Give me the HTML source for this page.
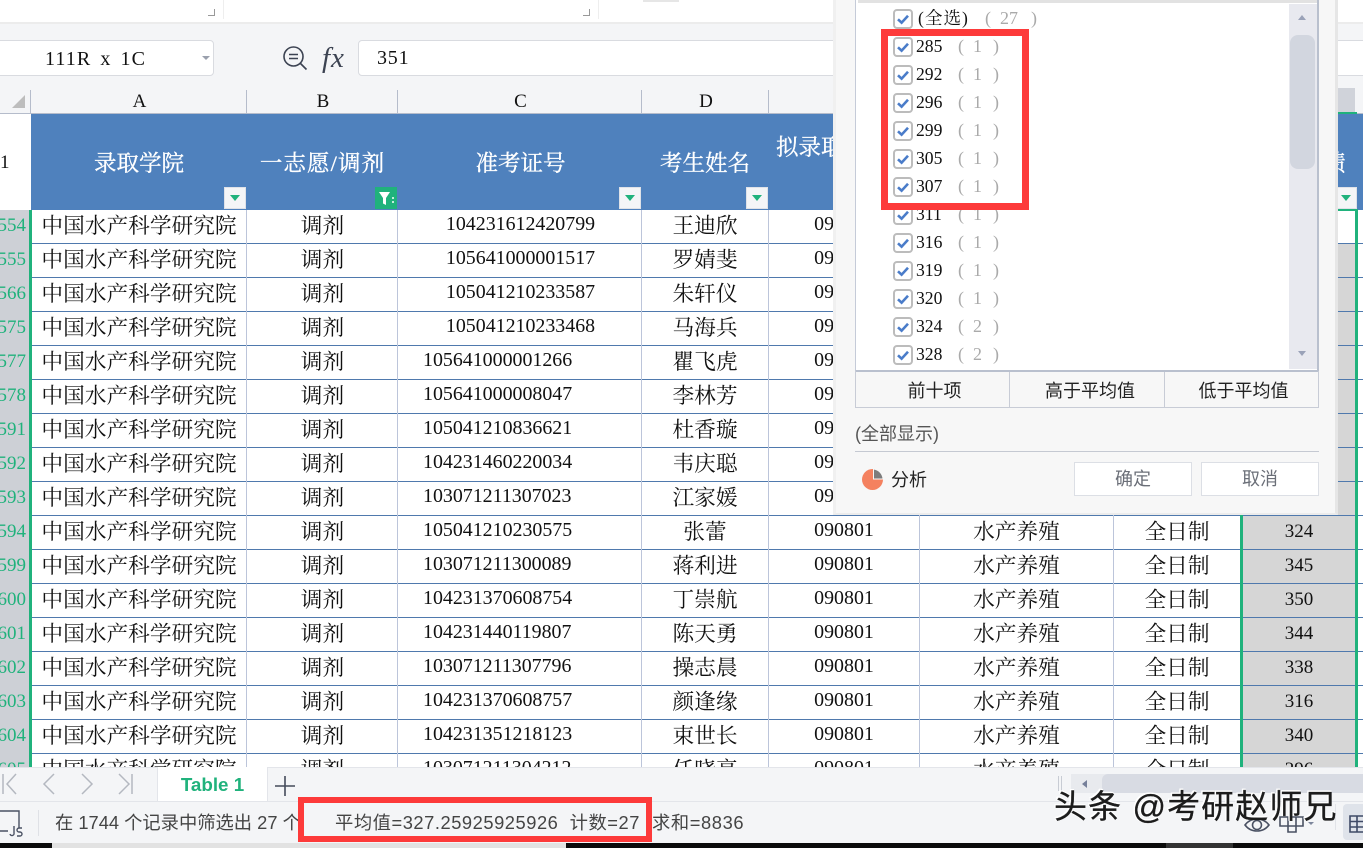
<!DOCTYPE html>
<html lang="zh">
<head>
<meta charset="utf-8">
<title>Table 1</title>
<style>
html,body{margin:0;padding:0}
body{width:1363px;height:848px;position:relative;overflow:hidden;background:#fff;font-family:"Liberation Serif","Noto Serif CJK SC",serif;color:#111}
div,span{box-sizing:border-box}
.p{position:absolute}
.hl{position:absolute;left:31px;width:1332px;height:1px;background:#4f79ad}
.vl{position:absolute;top:210px;height:557px;width:1px;background:#bcc5da}
.r{position:absolute;left:0;width:1363px;height:33px;line-height:32px;font-size:21.7px;white-space:nowrap}
.r span{position:absolute;top:0;text-align:center}
.n{left:0;width:26px;text-align:right!important;color:#20b27c;font-size:19px;direction:rtl;overflow:hidden}
.a{left:31px;width:216px}
.b{left:247px;width:151px}
.c{font-size:19.9px;top:-2px!important}
.c1{left:398px;width:245px}
.c2{left:423px;text-align:left!important}
.d{left:642px;width:126px}
.e{left:769px;width:150px;font-size:19.9px;top:-2px!important}
.f{left:920px;width:193px}
.g{left:1114px;width:126px}
.h{left:1243px;width:112px;font-size:19px;top:0!important}
.gy{position:absolute;left:1243px;width:112px;height:33px;background:#d6d6d6}
.lg{position:absolute;left:0;top:210px;width:30px;height:557px;background:#cdd0d6}
.ch{position:absolute;top:92px;font-size:19px;line-height:20px;text-align:center}
.cs{position:absolute;top:90px;width:1px;height:23px;background:#b5bccb}
.th{position:absolute;top:149px;height:30px;line-height:30px;font-size:22.5px;color:#fff;text-align:center;white-space:nowrap;-webkit-text-stroke:.35px #fff}
.fb{position:absolute;top:187px;width:22px;height:22px;background:#f4f5f7;border:1px solid #dfe2e8}
.fb:after{content:"";position:absolute;left:5px;top:7px;border-left:5px solid transparent;border-right:5px solid transparent;border-top:6px solid #20b27c}
.it{position:absolute;left:0;width:400px;height:28px;font-size:17.6px;line-height:26px;white-space:nowrap}
.it svg{position:absolute;left:38px;top:4px}
.it b{position:absolute;font-weight:normal;left:61px;top:0}
.it i{position:absolute;font-style:normal;color:#aaa;top:0;font-size:18px}
.btm{position:absolute;top:372px;height:39px;text-align:center;font:18px/38px "Liberation Sans","Noto Sans CJK SC",sans-serif;color:#222}
.st{position:absolute;top:810px;font:18.3px/26px "Liberation Sans","Noto Sans CJK SC",sans-serif;color:#444;white-space:nowrap}
</style>
</head>
<body>
<svg width="0" height="0" style="position:absolute"><defs>
<g id="k"><rect x="1" y="1" width="18" height="18" rx="3" fill="#fff" stroke="#bcbcbc" stroke-width="2"/><path d="M5 10.3l3.6 3.4L15 6.8" fill="none" stroke="#4a7cc9" stroke-width="2.6"/></g>
</defs></svg>

<!-- top ribbon -->
<div class="p" style="left:0;top:0;width:1363px;height:23px;background:#fff"></div>
<div class="p" style="left:208px;top:9px;width:7px;height:7px;border-right:1px solid #999;border-bottom:1px solid #999"></div>
<div class="p" style="left:583px;top:9px;width:7px;height:7px;border-right:1px solid #999;border-bottom:1px solid #999"></div>
<div class="p" style="left:223px;top:0;width:1px;height:19px;background:#eee"></div>
<div class="p" style="left:598px;top:0;width:1px;height:19px;background:#eee"></div>
<div class="p" style="left:643px;top:0;width:36px;height:2px;background:#e6e6e6"></div>

<!-- formula bar -->
<div class="p" style="left:0;top:23px;width:1363px;height:91px;background:#f4f5f7"></div>
<div class="p" style="left:0;top:22px;width:1363px;height:2px;background:#ececec"></div>
<div class="p" style="left:-6px;top:40px;width:220px;height:36px;background:#fff;border:1px solid #d9dbe0;border-radius:4px"></div>
<div class="p" style="left:45px;top:46px;font-size:20px;line-height:26px;letter-spacing:1.1px;word-spacing:3px;white-space:pre">111R x 1C</div>
<div class="p" style="left:202px;top:56px;border-left:4px solid transparent;border-right:4px solid transparent;border-top:4px solid #9aa0ad"></div>
<svg class="p" style="left:282px;top:45px" width="26" height="26" viewBox="0 0 26 26" fill="none" stroke="#3c4352" stroke-width="1.6"><circle cx="11.5" cy="11.5" r="9.5"/><path d="M7 9.5h9M7 13.5h9M18.5 18.5l6 6"/></svg>
<div class="p" style="left:322px;top:42px;font:italic 29px/32px 'Liberation Serif',serif;letter-spacing:1px;color:#3c4352">fx</div>
<div class="p" style="left:358px;top:40px;width:1010px;height:36px;background:#fff;border:1px solid #d9dbe0;border-radius:4px"></div>
<div class="p" style="left:377px;top:45px;font-size:20px;line-height:26px;letter-spacing:.8px">351</div>

<!-- column headers -->
<div class="p" style="left:0;top:113px;width:1363px;height:1px;background:#b5bccb"></div>
<div class="p" style="left:12px;top:95px;width:0;height:0;border-left:13px solid transparent;border-bottom:13px solid #bdbdbd"></div>
<div class="cs" style="left:30px"></div><div class="cs" style="left:246px"></div><div class="cs" style="left:397px"></div><div class="cs" style="left:641px"></div><div class="cs" style="left:768px"></div>
<div class="ch" style="left:32px;width:215px">A</div>
<div class="ch" style="left:248px;width:150px">B</div>
<div class="ch" style="left:399px;width:243px">C</div>
<div class="ch" style="left:643px;width:126px">D</div>
<div class="p" style="left:1338px;top:88px;width:17px;height:25px;background:#d0d3da"></div>
<div class="p" style="left:1338px;top:112px;width:19px;height:2px;background:#20b27c"></div>

<!-- blue header -->
<div class="p" style="left:31px;top:114px;width:1332px;height:96px;background:#4f81bd"></div>
<div class="p" style="left:0;top:150px;font-size:19px;line-height:26px">1</div>
<div class="th" style="left:31px;width:216px">录取学院</div>
<div class="th" style="left:247px;width:151px;letter-spacing:1.1px">一志愿/调剂</div>
<div class="th" style="left:398px;width:245px">准考证号</div>
<div class="th" style="left:642px;width:126px">考生姓名</div>
<div class="th" style="left:776px;top:133px">拟录取专业</div>
<div class="th" style="left:1323px">绩</div>
<div class="fb" style="left:224px"></div>
<div class="p" style="left:375px;top:187px;width:22px;height:22px;background:#20b27c"></div>
<svg class="p" style="left:375px;top:187px" width="22" height="22" viewBox="0 0 22 22"><path d="M4 5h11l-4 6v7l-3-1.5V11z" fill="#fff"/><path d="M17 11h2M17 15h2" stroke="#fff" stroke-width="1.6"/></svg>
<div class="fb" style="left:619px"></div>
<div class="fb" style="left:746px"></div>
<div class="fb" style="left:1335px"></div>

<!-- data -->
<div class="lg"></div>
<div class="gy" style="top:244px"></div><div class="gy" style="top:278px"></div><div class="gy" style="top:312px"></div><div class="gy" style="top:346px"></div><div class="gy" style="top:380px"></div><div class="gy" style="top:414px"></div><div class="gy" style="top:448px"></div><div class="gy" style="top:482px"></div><div class="gy" style="top:516px"></div><div class="gy" style="top:550px"></div><div class="gy" style="top:584px"></div><div class="gy" style="top:618px"></div><div class="gy" style="top:652px"></div><div class="gy" style="top:686px"></div><div class="gy" style="top:720px"></div><div class="gy" style="top:754px"></div>

<div class="hl" style="top:243px"></div><div class="hl" style="top:277px"></div><div class="hl" style="top:311px"></div><div class="hl" style="top:345px"></div><div class="hl" style="top:379px"></div><div class="hl" style="top:413px"></div><div class="hl" style="top:447px"></div><div class="hl" style="top:481px"></div><div class="hl" style="top:515px"></div><div class="hl" style="top:549px"></div><div class="hl" style="top:583px"></div><div class="hl" style="top:617px"></div><div class="hl" style="top:651px"></div><div class="hl" style="top:685px"></div><div class="hl" style="top:719px"></div><div class="hl" style="top:753px"></div>

<div class="vl" style="left:246px"></div><div class="vl" style="left:397px"></div><div class="vl" style="left:641px"></div><div class="vl" style="left:768px"></div><div class="vl" style="left:919px"></div><div class="vl" style="left:1113px"></div>

<div class="r" style="top:210px"><span class="n">1554</span><span class="a">中国水产科学研究院</span><span class="b">调剂</span><span class="c c1">104231612420799</span><span class="d">王迪欣</span><span class="e">090801</span><span class="f">水产养殖</span><span class="g">全日制</span></div>
<div class="r" style="top:244px"><span class="n">1555</span><span class="a">中国水产科学研究院</span><span class="b">调剂</span><span class="c c1">105641000001517</span><span class="d">罗婧斐</span><span class="e">090801</span><span class="f">水产养殖</span><span class="g">全日制</span></div>
<div class="r" style="top:278px"><span class="n">1566</span><span class="a">中国水产科学研究院</span><span class="b">调剂</span><span class="c c1">105041210233587</span><span class="d">朱轩仪</span><span class="e">090801</span><span class="f">水产养殖</span><span class="g">全日制</span></div>
<div class="r" style="top:312px"><span class="n">1575</span><span class="a">中国水产科学研究院</span><span class="b">调剂</span><span class="c c1">105041210233468</span><span class="d">马海兵</span><span class="e">090801</span><span class="f">水产养殖</span><span class="g">全日制</span></div>
<div class="r" style="top:346px"><span class="n">1577</span><span class="a">中国水产科学研究院</span><span class="b">调剂</span><span class="c c2">105641000001266</span><span class="d">瞿飞虎</span><span class="e">090801</span><span class="f">水产养殖</span><span class="g">全日制</span></div>
<div class="r" style="top:380px"><span class="n">1578</span><span class="a">中国水产科学研究院</span><span class="b">调剂</span><span class="c c2">105641000008047</span><span class="d">李林芳</span><span class="e">090801</span><span class="f">水产养殖</span><span class="g">全日制</span></div>
<div class="r" style="top:414px"><span class="n">1591</span><span class="a">中国水产科学研究院</span><span class="b">调剂</span><span class="c c2">105041210836621</span><span class="d">杜香璇</span><span class="e">090801</span><span class="f">水产养殖</span><span class="g">全日制</span></div>
<div class="r" style="top:448px"><span class="n">1592</span><span class="a">中国水产科学研究院</span><span class="b">调剂</span><span class="c c2">104231460220034</span><span class="d">韦庆聪</span><span class="e">090801</span><span class="f">水产养殖</span><span class="g">全日制</span></div>
<div class="r" style="top:482px"><span class="n">1593</span><span class="a">中国水产科学研究院</span><span class="b">调剂</span><span class="c c2">103071211307023</span><span class="d">江家媛</span><span class="e">090801</span><span class="f">水产养殖</span><span class="g">全日制</span></div>
<div class="r" style="top:516px"><span class="n">1594</span><span class="a">中国水产科学研究院</span><span class="b">调剂</span><span class="c c2">105041210230575</span><span class="d">张蕾</span><span class="e">090801</span><span class="f">水产养殖</span><span class="g">全日制</span><span class="h">324</span></div>
<div class="r" style="top:550px"><span class="n">1599</span><span class="a">中国水产科学研究院</span><span class="b">调剂</span><span class="c c2">103071211300089</span><span class="d">蒋利进</span><span class="e">090801</span><span class="f">水产养殖</span><span class="g">全日制</span><span class="h">345</span></div>
<div class="r" style="top:584px"><span class="n">1600</span><span class="a">中国水产科学研究院</span><span class="b">调剂</span><span class="c c2">104231370608754</span><span class="d">丁崇航</span><span class="e">090801</span><span class="f">水产养殖</span><span class="g">全日制</span><span class="h">350</span></div>
<div class="r" style="top:618px"><span class="n">1601</span><span class="a">中国水产科学研究院</span><span class="b">调剂</span><span class="c c2">104231440119807</span><span class="d">陈天勇</span><span class="e">090801</span><span class="f">水产养殖</span><span class="g">全日制</span><span class="h">344</span></div>
<div class="r" style="top:652px"><span class="n">1602</span><span class="a">中国水产科学研究院</span><span class="b">调剂</span><span class="c c2">103071211307796</span><span class="d">操志晨</span><span class="e">090801</span><span class="f">水产养殖</span><span class="g">全日制</span><span class="h">338</span></div>
<div class="r" style="top:686px"><span class="n">1603</span><span class="a">中国水产科学研究院</span><span class="b">调剂</span><span class="c c2">104231370608757</span><span class="d">颜逢缘</span><span class="e">090801</span><span class="f">水产养殖</span><span class="g">全日制</span><span class="h">316</span></div>
<div class="r" style="top:720px"><span class="n">1604</span><span class="a">中国水产科学研究院</span><span class="b">调剂</span><span class="c c2">104231351218123</span><span class="d">束世长</span><span class="e">090801</span><span class="f">水产养殖</span><span class="g">全日制</span><span class="h">340</span></div>
<div class="r" style="top:754px"><span class="n">1605</span><span class="a">中国水产科学研究院</span><span class="b">调剂</span><span class="c c2">103071211304212</span><span class="d">任晓亮</span><span class="e">090801</span><span class="f">水产养殖</span><span class="g">全日制</span><span class="h">296</span></div>

<!-- selection borders -->
<div class="p" style="left:29px;top:210px;width:3px;height:557px;background:#20b27c"></div>
<div class="p" style="left:1240px;top:210px;width:3px;height:557px;background:#20b27c"></div>
<div class="p" style="left:1355px;top:210px;width:3px;height:557px;background:#20b27c"></div>
<div class="p" style="left:1240px;top:209px;width:118px;height:2px;background:#20b27c"></div>

<!-- filter dialog -->
<div class="p" style="left:833px;top:0;width:505px;height:515px;background:#f7f7f7;border-left:3px solid #f0f0f0;border-right:3px solid #e6e6e6;border-bottom:2px solid #ececec"></div>
<div class="p" style="left:855px;top:0;width:464px;height:372px;background:#fff;border-left:1px solid #c5cbd8;border-right:2px solid #b9c0ce;border-bottom:2px solid #b9c0ce"></div>
<div class="p" style="left:858px;top:0;width:459px;height:3px;background:#e2e2e2"></div>
<div class="p" style="left:1289px;top:4px;width:28px;height:365px;background:#e8e9ef"></div>
<div class="p" style="left:1290px;top:35px;width:25px;height:134px;background:#d2d6df;border-radius:8px"></div>
<div class="p" style="left:1298px;top:15px;border-left:4px solid transparent;border-right:4px solid transparent;border-bottom:5px solid #9aa2b8"></div>
<div class="p" style="left:1298px;top:351px;border-left:4px solid transparent;border-right:4px solid transparent;border-top:5px solid #9aa2b8"></div>

<div class="p" style="left:855px;top:0;width:430px;height:369px;overflow:hidden">
<div class="it" style="top:5px"><svg width="20" height="20"><use href="#k"/></svg><b style="left:63px;letter-spacing:1px">(全选)</b><i style="left:130px">(</i><i style="left:145px">27</i><i style="left:176px">)</i></div>
<div class="it" style="top:33px"><svg width="20" height="20"><use href="#k"/></svg><b>285</b><i style="left:103px">(</i><i style="left:118px">1</i><i style="left:138px">)</i></div>
<div class="it" style="top:61px"><svg width="20" height="20"><use href="#k"/></svg><b>292</b><i style="left:103px">(</i><i style="left:118px">1</i><i style="left:138px">)</i></div>
<div class="it" style="top:89px"><svg width="20" height="20"><use href="#k"/></svg><b>296</b><i style="left:103px">(</i><i style="left:118px">1</i><i style="left:138px">)</i></div>
<div class="it" style="top:117px"><svg width="20" height="20"><use href="#k"/></svg><b>299</b><i style="left:103px">(</i><i style="left:118px">1</i><i style="left:138px">)</i></div>
<div class="it" style="top:145px"><svg width="20" height="20"><use href="#k"/></svg><b>305</b><i style="left:103px">(</i><i style="left:118px">1</i><i style="left:138px">)</i></div>
<div class="it" style="top:173px"><svg width="20" height="20"><use href="#k"/></svg><b>307</b><i style="left:103px">(</i><i style="left:118px">1</i><i style="left:138px">)</i></div>
<div class="it" style="top:201px"><svg width="20" height="20"><use href="#k"/></svg><b>311</b><i style="left:103px">(</i><i style="left:118px">1</i><i style="left:138px">)</i></div>
<div class="it" style="top:229px"><svg width="20" height="20"><use href="#k"/></svg><b>316</b><i style="left:103px">(</i><i style="left:118px">1</i><i style="left:138px">)</i></div>
<div class="it" style="top:257px"><svg width="20" height="20"><use href="#k"/></svg><b>319</b><i style="left:103px">(</i><i style="left:118px">1</i><i style="left:138px">)</i></div>
<div class="it" style="top:285px"><svg width="20" height="20"><use href="#k"/></svg><b>320</b><i style="left:103px">(</i><i style="left:118px">1</i><i style="left:138px">)</i></div>
<div class="it" style="top:313px"><svg width="20" height="20"><use href="#k"/></svg><b>324</b><i style="left:103px">(</i><i style="left:118px">2</i><i style="left:138px">)</i></div>
<div class="it" style="top:341px"><svg width="20" height="20"><use href="#k"/></svg><b>328</b><i style="left:103px">(</i><i style="left:118px">2</i><i style="left:138px">)</i></div>
</div>

<div class="p" style="left:855px;top:371px;width:464px;height:37px;border:1px solid #c8ccd6;border-top:0"></div>
<div class="p" style="left:1009px;top:372px;width:1px;height:35px;background:#c8ccd6"></div>
<div class="p" style="left:1164px;top:372px;width:1px;height:35px;background:#c8ccd6"></div>
<div class="btm" style="left:858px;width:153px">前十项</div>
<div class="btm" style="left:1013px;width:154px">高于平均值</div>
<div class="btm" style="left:1167px;width:153px">低于平均值</div>
<div class="p" style="left:855px;top:421px;font:18px/26px 'Liberation Sans','Noto Sans CJK SC',sans-serif;color:#555">(全部显示)</div>
<div class="p" style="left:855px;top:451px;width:464px;height:1px;background:#c5c9d2"></div>
<svg class="p" style="left:861px;top:468px" width="23" height="23" viewBox="0 0 23 23"><circle cx="11.5" cy="11.5" r="10.5" fill="#f4815f"/><path d="M12.5 1A10.5 10.5 0 0 1 22 11H12.5z" fill="#7d7d7d" stroke="#f7f7f7" stroke-width="1"/></svg>
<div class="p" style="left:891px;top:467px;font:18px/26px 'Liberation Sans','Noto Sans CJK SC',sans-serif;color:#222">分析</div>
<div class="p" style="left:1074px;top:462px;width:118px;height:34px;background:#fff;border:1px solid #dcdfe5;font:18px/33px 'Liberation Sans','Noto Sans CJK SC',sans-serif;color:#6b6f78;text-align:center">确定</div>
<div class="p" style="left:1201px;top:462px;width:118px;height:34px;background:#fff;border:1px solid #dcdfe5;font:18px/33px 'Liberation Sans','Noto Sans CJK SC',sans-serif;color:#6b6f78;text-align:center">取消</div>

<!-- red box top -->
<div class="p" style="left:881px;top:29px;width:148px;height:181px;border:7px solid #fd3a3a"></div>

<!-- sheet tabs -->
<div class="p" style="left:0;top:767px;width:1363px;height:34px;background:#f4f5f7;border-top:1px solid #e3e5ea"></div>
<svg class="p" style="left:0;top:770px" width="140" height="28" viewBox="0 0 140 28" fill="none" stroke="#b4b8c0" stroke-width="1.5"><path d="M3 4v20M16 4L7 14l9 10M54 4L44 14l10 10M82 4l10 10-10 10M119 4l10 10-10 10M132 4v20"/></svg>
<div class="p" style="left:157px;top:767px;width:111px;height:34px;background:#fff;border-left:1px solid #e3e5ea;border-right:1px solid #e3e5ea;text-align:center;font:bold 18.8px/35px 'Liberation Sans',sans-serif;color:#20b27c">Table 1</div>
<svg class="p" style="left:275px;top:776px" width="20" height="20" fill="none" stroke="#444b5a" stroke-width="1.6"><path d="M10 0v20M0 10h20"/></svg>
<div class="p" style="left:1071px;top:774px;width:292px;height:19px;background:#e8eaee"></div>
<div class="p" style="left:1102px;top:774px;width:261px;height:19px;background:#d8dbe3;border-radius:6px 0 0 6px"></div>
<div class="p" style="left:1082px;top:780px;border-top:4px solid transparent;border-bottom:4px solid transparent;border-right:5px solid #76809a"></div>
<div class="p" style="left:1058px;top:776px;width:4px;height:15px;border-left:1px solid #c8ccd4;border-right:1px solid #c8ccd4"></div>

<!-- status bar -->
<div class="p" style="left:0;top:801px;width:1363px;height:42px;background:#f4f5f7;border-top:1px solid #e3e5ea"></div>
<svg class="p" style="left:0;top:809px" width="24" height="28" fill="none" stroke="#4a5163" stroke-width="1.4"><path d="M0 2h19v17M0 22h8"/><path d="M14 17v7a2 2 0 0 1-4 1M22 19h-3a1.5 1.5 0 0 0 0 4h1a1.5 1.5 0 0 1 0 4h-3"/></svg>
<div class="p" style="left:38px;top:810px;width:1px;height:26px;background:#dfe1e6"></div>
<div class="st" style="left:55px">在 1744 个记录中筛选出 27 个</div>
<div class="st" style="left:335px;white-space:pre;letter-spacing:.55px">平均值=327.25925925926  计数=27</div>
<div class="st" style="left:652px;letter-spacing:.6px">求和=8836</div>
<svg class="p" style="left:1243px;top:811px" width="76" height="24" fill="none" stroke="#4a5163" stroke-width="1.6"><path d="M2 14c6-8 18-8 24 0-6 8-18 8-24 0z"/><circle cx="14" cy="14" r="4.5"/><path d="M37 6h23v9H37zM45 6v15h8V6"/><path d="M65 11h6l-3 3z" fill="#7d869c" stroke="none"/></svg>
<div class="p" style="left:1335px;top:804px;width:1px;height:26px;background:#e1e3e8"></div>
<div class="p" style="left:1343px;top:804px;width:24px;height:36px;background:#dfe3ea;border-radius:4px"></div>
<svg class="p" style="left:1349px;top:815px" width="14" height="18" fill="none" stroke="#3f4a66" stroke-width="1.6"><path d="M1 1h20v16H1zM1 6.5h20M1 12h20M8 1v16"/></svg>

<!-- bottom desktop strip -->
<div class="p" style="left:0;top:843px;width:1363px;height:5px;background:#0b0b0b"></div>
<div class="p" style="left:52px;top:843px;width:514px;height:5px;background:#e2e2e2"></div>
<div class="p" style="left:1166px;top:843px;width:67px;height:5px;background:#333"></div>

<!-- red box bottom -->
<div class="p" style="left:298px;top:797px;width:354px;height:45px;border:6px solid #fd3a3a"></div>

<!-- watermark -->
<div class="p" style="left:1054px;top:784px;font:33px/46px 'Liberation Sans','Noto Sans CJK SC',sans-serif;color:#1c1c1c;white-space:pre;letter-spacing:1.1px;-webkit-text-stroke:.3px #1c1c1c;text-shadow:-1.5px -1.5px 0 #fff,-1.5px 0 0 #fff,0 -1.5px 0 #fff">头条 @考研赵师兄</div>
</body>
</html>
